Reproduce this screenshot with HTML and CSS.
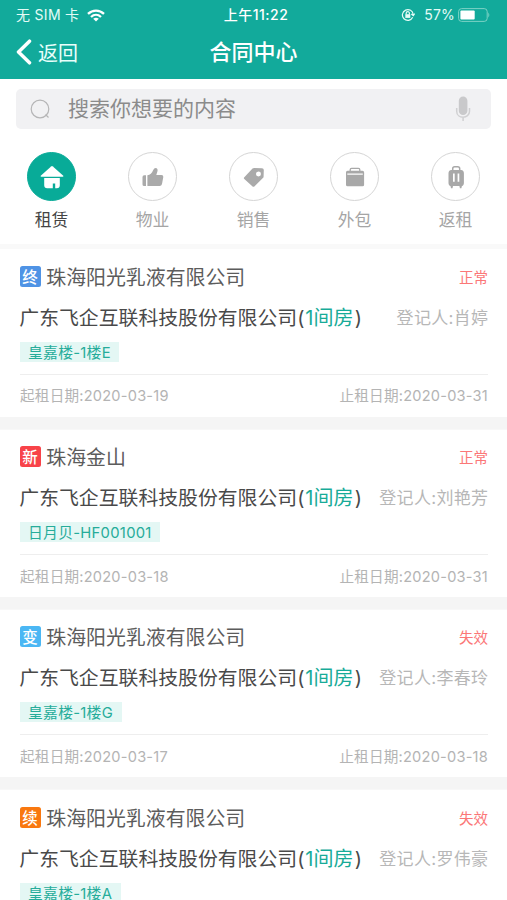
FILE: index.html
```html
<!DOCTYPE html>
<html lang="zh-CN">
<head>
<meta charset="utf-8">
<title>合同中心</title>
<link rel="stylesheet" href="styles.css">
</head>
<body>
<header class="header">
  <div class="status">
    <div class="carrier"><span>无 SIM 卡</span>
      <svg width="18" height="13" viewBox="0 0 18 13" fill="none" stroke="#fff" stroke-width="2.3"><path d="M1 4.9C5.6.4 12.4.4 17 4.9M4 8C7 5.2 11 5.2 14 8"/><path d="M9 12.6 6.2 9.8Q9 7.6 11.8 9.8Z" fill="#fff" stroke="none"/></svg>
    </div>
    <div class="clock">上午11:22</div>
    <div class="power">
      <svg width="14" height="14" viewBox="0 0 14 14" fill="none" stroke="#e4fbf6" stroke-width="1.2"><path d="M11.7 9.3A5.4 5.4 0 1 1 12.2 6.6M10.3 6.1l2 1.5 1.5-2"/><path d="M5.2 6.4V5.2a1.6 1.6 0 0 1 3.2 0v1.2"/><path d="M4.3 6.2h5v3.7h-5z" fill="#e4fbf6" stroke="none"/></svg>
      <span class="percent">57%</span>
      <svg width="33" height="14" viewBox="0 0 33 14"><rect x=".6" y=".6" width="28.6" height="12.8" rx="3" fill="none" stroke="#7dd2c5"/><rect x="2.4" y="2.4" width="14.3" height="9.2" rx="1" fill="#fff"/><path d="M30.3 4.5q2 2.5 0 5z" fill="#7dd2c5"/></svg>
    </div>
  </div>
  <nav class="navbar">
    <a class="back"><svg width="17" height="26" viewBox="0 0 17 26" fill="none" stroke="#fff" stroke-width="3.5" stroke-linecap="round" stroke-linejoin="round"><path d="M13.5 2.2 2.5 13l11 10.8"/></svg><span>返回</span></a>
    <h1 class="title">合同中心</h1>
    <span></span>
  </nav>
</header>
<div class="search">
  <svg width="20" height="20" viewBox="0 0 20 20" fill="none" stroke="#b5b5b6" stroke-width="1.2"><circle cx="10" cy="10" r="8.8"/><path d="m15.5 15.5 3 3"/></svg>
  <span class="placeholder">搜索你想要的内容</span>
  <svg width="16" height="26" viewBox="0 0 16 26"><rect x="3.8" y=".5" width="8.6" height="18.5" rx="4.3" fill="#c9c9cb"/><path d="M1.7 12v3.2c0 8 12.8 8 12.8 0V12M8.1 21v4" fill="none" stroke="#d0d0d2" stroke-width="1.5"/></svg>
</div>
<div class="tabs">
  <div class="tab active"><div class="disc"><svg width="24" height="24" viewBox="0 0 24 24" fill="#fff"><path d="M11.1 1.5q.9-.8 1.8 0l10.4 9.3q.5 1-.7 1H1.4q-1.2 0-.7-1Z"/><path d="M4.2 13h15.6v7.2q0 3-3 3h-1.6v-4.7h-2.4v4.7H7.2q-3 0-3-3Z"/></svg></div><span>租赁</span></div>
  <div class="tab"><div class="disc"><svg width="24" height="24" viewBox="0 0 24 24" fill="#aaa"><path d="M3.2 10.2H5v10.9H3.2q-1.7 0-1.7-1.7v-7.5q0-1.7 1.7-1.7ZM6.4 10.3q4-.8 5.7-5.1Q13 2.8 15 2.9q2.2.6 1.4 3.5L15.3 10h5.2q2 0 1.8 2.1L21 19q-.5 2.1-2.4 2.1H6.4Z"/></svg></div><span>物业</span></div>
  <div class="tab"><div class="disc"><svg width="24" height="24" viewBox="0 0 24 24" fill="#aaa" fill-rule="evenodd"><path d="m2.3 12.2 8.2-8.6Q11.2 3 12.2 3l7.8.2q1.7.2 1.8 1.8l-.2 6.4q0 1-.7 1.7l-8.3 8.2q-1.2 1-2.3 0l-8-7.3q-1-.9 0-1.8ZM16.4 6.5a2.5 2.5 0 1 0 .1 5 2.5 2.5 0 0 0-.1-5Z"/></svg></div><span>销售</span></div>
  <div class="tab"><div class="disc"><svg width="24" height="24" viewBox="0 0 24 24" fill="#a8a8a8"><path d="M7.2 6V4.7q0-1.3 1.3-1.3h7q1.3 0 1.3 1.3V6" fill="none" stroke="#a8a8a8" stroke-width="1.3"/><path d="M4.5 5.7h15q1.6 0 1.6 1.6v1.1H3V7.3q0-1.6 1.5-1.6ZM3 9.8h18.1v10q0 1.5-1.6 1.5h-15Q3 21.3 3 19.8Z"/><path d="M3 8h1.3v2H3zM19.8 8h1.3v2h-1.3z"/></svg></div><span>外包</span></div>
  <div class="tab"><div class="disc"><svg width="24" height="24" viewBox="0 0 24 24" fill="#a8a8a8" fill-rule="evenodd"><path d="M8.7 6V3.8q0-2 2-2h3q2 0 2 2V6" fill="none" stroke="#a8a8a8" stroke-width="1.5"/><path d="M7.3 5h9.8q2.8.4 2.8 3.2v9.7q0 2.9-2.8 3.2H7.3q-2.8-.3-2.8-3.2V8.2Q4.5 5.4 7.3 5ZM9 8.6v8.2h1.7V8.6Zm4.6 0v8.2h1.7V8.6Z"/><path d="M6.5 21H9l-.5 2.3H7ZM15.4 21h2.5l-.5 2.3h-1.5Z"/></svg></div><span>返租</span></div>
</div>
<main class="list">
  <section class="card">
    <div class="row company"><i class="badge end">终</i><span class="name">珠海阳光乳液有限公司</span><span class="state">正常</span></div>
    <div class="row tenant"><span>广东飞企互联科技股份有限公司(<b>1间房</b>)</span><span class="agent">登记人:肖婷</span></div>
    <div class="tag">皇嘉楼-1楼E</div>
    <div class="row dates"><span>起租日期:2020-03-19</span><span>止租日期:2020-03-31</span></div>
  </section>
  <section class="card">
    <div class="row company"><i class="badge new">新</i><span class="name">珠海金山</span><span class="state">正常</span></div>
    <div class="row tenant"><span>广东飞企互联科技股份有限公司(<b>1间房</b>)</span><span class="agent">登记人:刘艳芳</span></div>
    <div class="tag">日月贝-HF001001</div>
    <div class="row dates"><span>起租日期:2020-03-18</span><span>止租日期:2020-03-31</span></div>
  </section>
  <section class="card">
    <div class="row company"><i class="badge change">变</i><span class="name">珠海阳光乳液有限公司</span><span class="state">失效</span></div>
    <div class="row tenant"><span>广东飞企互联科技股份有限公司(<b>1间房</b>)</span><span class="agent">登记人:李春玲</span></div>
    <div class="tag">皇嘉楼-1楼G</div>
    <div class="row dates"><span>起租日期:2020-03-17</span><span>止租日期:2020-03-18</span></div>
  </section>
  <section class="card last">
    <div class="row company"><i class="badge renew">续</i><span class="name">珠海阳光乳液有限公司</span><span class="state">失效</span></div>
    <div class="row tenant"><span>广东飞企互联科技股份有限公司(<b>1间房</b>)</span><span class="agent">登记人:罗伟豪</span></div>
    <div class="tag">皇嘉楼-1楼A</div>
  </section>
</main>
</body>
</html>
```
FILE: styles.css
```css
* { box-sizing: border-box; }
html { height: 100%; overflow: hidden; }
body { margin: 0; height: 900px; overflow: hidden; background: #fff; font-family: Inter, "Noto Sans CJK SC", sans-serif; white-space: nowrap; color: #505050; }
svg { display: block; flex: none; }
.header { height: 79px; background: #12aa9b; color: #fff; }
.status { display: grid; grid-template-columns: 1fr auto 1fr; align-items: center; height: 30px; padding: 0 16px; font-size: 14px; line-height: 20px; }
.carrier, .power { display: flex; align-items: center; color: #e4fbf6; }
.carrier { gap: 7.5px; letter-spacing: .3px; }
.clock { font-weight: 500; padding-left: 5px; letter-spacing: .5px; }
.power { justify-content: flex-end; }
.percent { margin: 0 3px 0 9px; letter-spacing: .2px; }
.navbar { display: grid; grid-template-columns: 1fr auto 1fr; align-items: center; height: 44px; padding: 0 16px; }
.back { display: flex; align-items: center; gap: 5px; font-size: 20px; color: #e9fffb; }
.title { margin: 0; font-size: 22px; line-height: 30px; font-weight: 500; }
.search { display: flex; align-items: center; height: 40px; margin: 10px 16px 0; padding: 0 20px 0 14px; border-radius: 5px; background: #f1f1f3; color: #8b8b8b; }
.placeholder { flex: 1; margin-left: 18px; font-size: 21px; line-height: 30px; }
.tabs { display: flex; justify-content: space-between; height: 115px; padding: 23px 26px 0; font-size: 16.8px; color: #a5a5a5; }
.tab { display: flex; flex-direction: column; align-items: center; gap: 7px; width: 51px; line-height: 24px; }
.disc { display: flex; align-items: center; justify-content: center; width: 49px; height: 49px; border: 1.5px solid #d5d5d5; border-radius: 50%; }
.active { color: #444; }
.active .disc { background: #08ab98; border-color: #08ab98; }
.list { border-top: 5px solid #f9f9f9; }
.card { height: 167.5px; margin-bottom: 12.7px; padding: 15px 19px 0 20px; box-shadow: 0 12.7px #f5f5f5; }
.last { height: 110px; margin-bottom: 0; box-shadow: none; }
.row { display: flex; align-items: center; justify-content: space-between; }
.company { height: 25px; font-size: 19.9px; }
.badge { flex: none; width: 21px; height: 21px; margin-left: -.5px; border-radius: 2.5px; color: #fff; font: 500 15.5px/21px "Noto Sans CJK SC", sans-serif; text-align: center; }
.end { background: #4f93e5; }
.new { background: #f84349; }
.change { background: #4bb7f4; }
.renew { background: #f9780f; }
.name { flex: 1; margin-left: 5.8px; color: #5c5c5c; }
.state { color: #fb7777; font-size: 14.5px; }
.tenant { height: 30px; margin-top: 12.6px; font-size: 19.85px; color: #494949; }
.tenant > :first-child { margin-left: -.7px; }
.tenant b { margin: 0 1.4px 0 .9px; font-size: 20px; font-weight: 400; color: #18ab98; }
.agent { font-size: 17px; letter-spacing: .3px; margin-right: -.3px; color: #b7b7b7; }
.tag { width: fit-content; height: 20px; margin-top: 10.4px; padding: 0 8.5px 0 8px; background: #e4f7f4; color: #26ac9a; font-size: 14.8px; line-height: 22.5px; letter-spacing: .28px; }
.dates { height: 41px; margin-top: 12px; border-top: 1px solid #eee; color: #b4b4b4; font-size: 14.6px; letter-spacing: .22px; }
```
